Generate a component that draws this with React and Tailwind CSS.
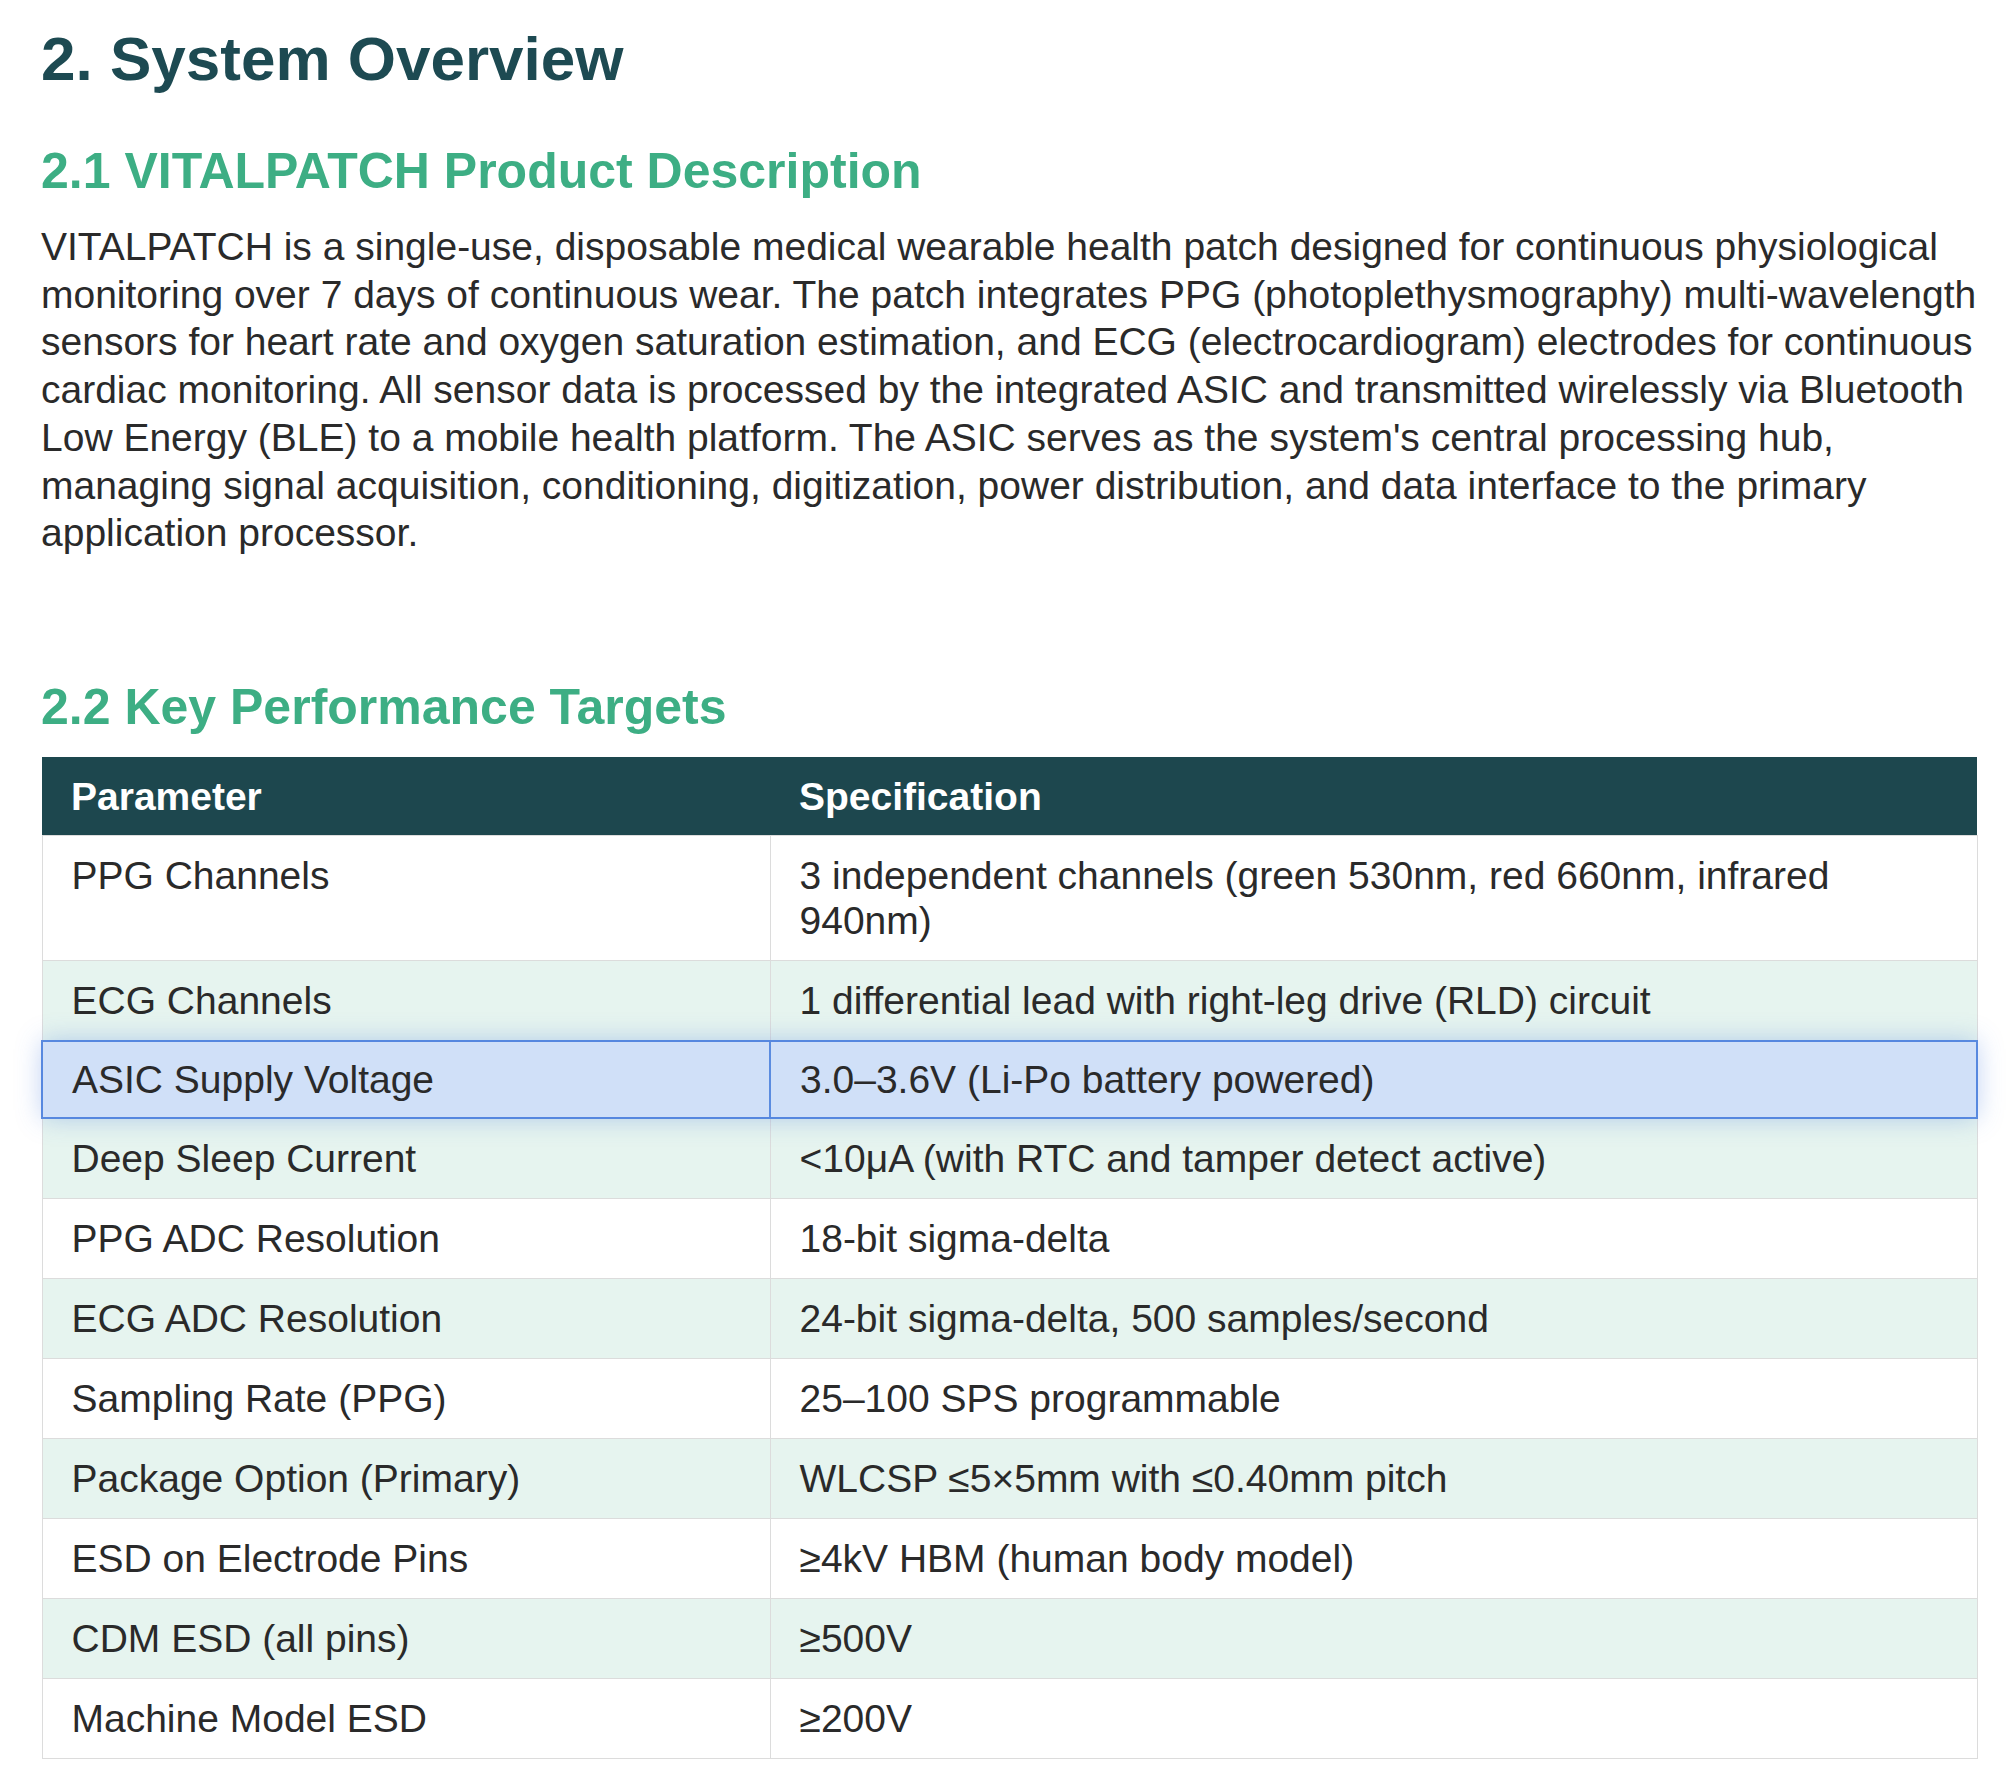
export default function App() {
  const rows = [
    ["PPG Channels", "3 independent channels (green 530nm, red 660nm, infrared 940nm)"],
    ["ECG Channels", "1 differential lead with right-leg drive (RLD) circuit"],
    ["ASIC Supply Voltage", "3.0–3.6V (Li-Po battery powered)"],
    ["Deep Sleep Current", "<10μA (with RTC and tamper detect active)"],
    ["PPG ADC Resolution", "18-bit sigma-delta"],
    ["ECG ADC Resolution", "24-bit sigma-delta, 500 samples/second"],
    ["Sampling Rate (PPG)", "25–100 SPS programmable"],
    ["Package Option (Primary)", "WLCSP ≤5×5mm with ≤0.40mm pitch"],
    ["ESD on Electrode Pins", "≥4kV HBM (human body model)"],
    ["CDM ESD (all pins)", "≥500V"],
    ["Machine Model ESD", "≥200V"],
  ];
  return (
    <div className="bg-white w-[2006px] min-h-[1784px] pl-[41px] pr-[28px] pt-[23px]" style={{ fontFamily: '"Liberation Sans", Arial, sans-serif' }}>
      <h1 className="text-[62px] leading-[72px] font-bold text-[#1d4a52]">2. System Overview</h1>
      <h2 className="mt-[46px] text-[50px] leading-[60px] font-bold text-[#3dae84]">2.1 VITALPATCH Product Description</h2>
      <p className="mt-[22px] text-[39px] leading-[47.7px] text-[#2a2a2a]">
        VITALPATCH is a single-use, disposable medical wearable health patch designed for continuous physiological monitoring over 7 days of continuous wear. The patch integrates PPG (photoplethysmography) multi-wavelength sensors for heart rate and oxygen saturation estimation, and ECG (electrocardiogram) electrodes for continuous cardiac monitoring. All sensor data is processed by the integrated ASIC and transmitted wirelessly via Bluetooth Low Energy (BLE) to a mobile health platform. The ASIC serves as the system's central processing hub, managing signal acquisition, conditioning, digitization, power distribution, and data interface to the primary application processor.
      </p>
      <h2 className="mt-[120px] text-[50px] leading-[60px] font-bold text-[#3dae84]">2.2 Key Performance Targets</h2>
      <table className="mt-[20px] w-[1937px] border-collapse text-[39px] leading-[45px] text-[#2a2a2a]">
        <thead>
          <tr className="bg-[#1d474e] text-white">
            <th className="w-[728px] text-left font-bold px-[29px] h-[79px]">Parameter</th>
            <th className="text-left font-bold px-[29px] h-[79px]">Specification</th>
          </tr>
        </thead>
        <tbody>
          {rows.map(([a, b], i) => {
            const hl = i === 2;
            const bg = hl ? "bg-[#d0e0f8] shadow-[0_0_24px_rgba(70,120,220,0.35)] relative" : i % 2 === 1 ? "bg-[#e6f4ef]" : "bg-white";
            const cell = hl
              ? "border-2 border-[#5b8ce0] px-[29px] py-[15px] align-top text-left"
              : "border border-[#dcdcdc] px-[29px] py-[17px] align-top text-left";
            return (
              <tr key={i} className={bg}>
                <td className={cell}>{a}</td>
                <td className={cell}>{b}</td>
              </tr>
            );
          })}
        </tbody>
      </table>
    </div>
  );
}
